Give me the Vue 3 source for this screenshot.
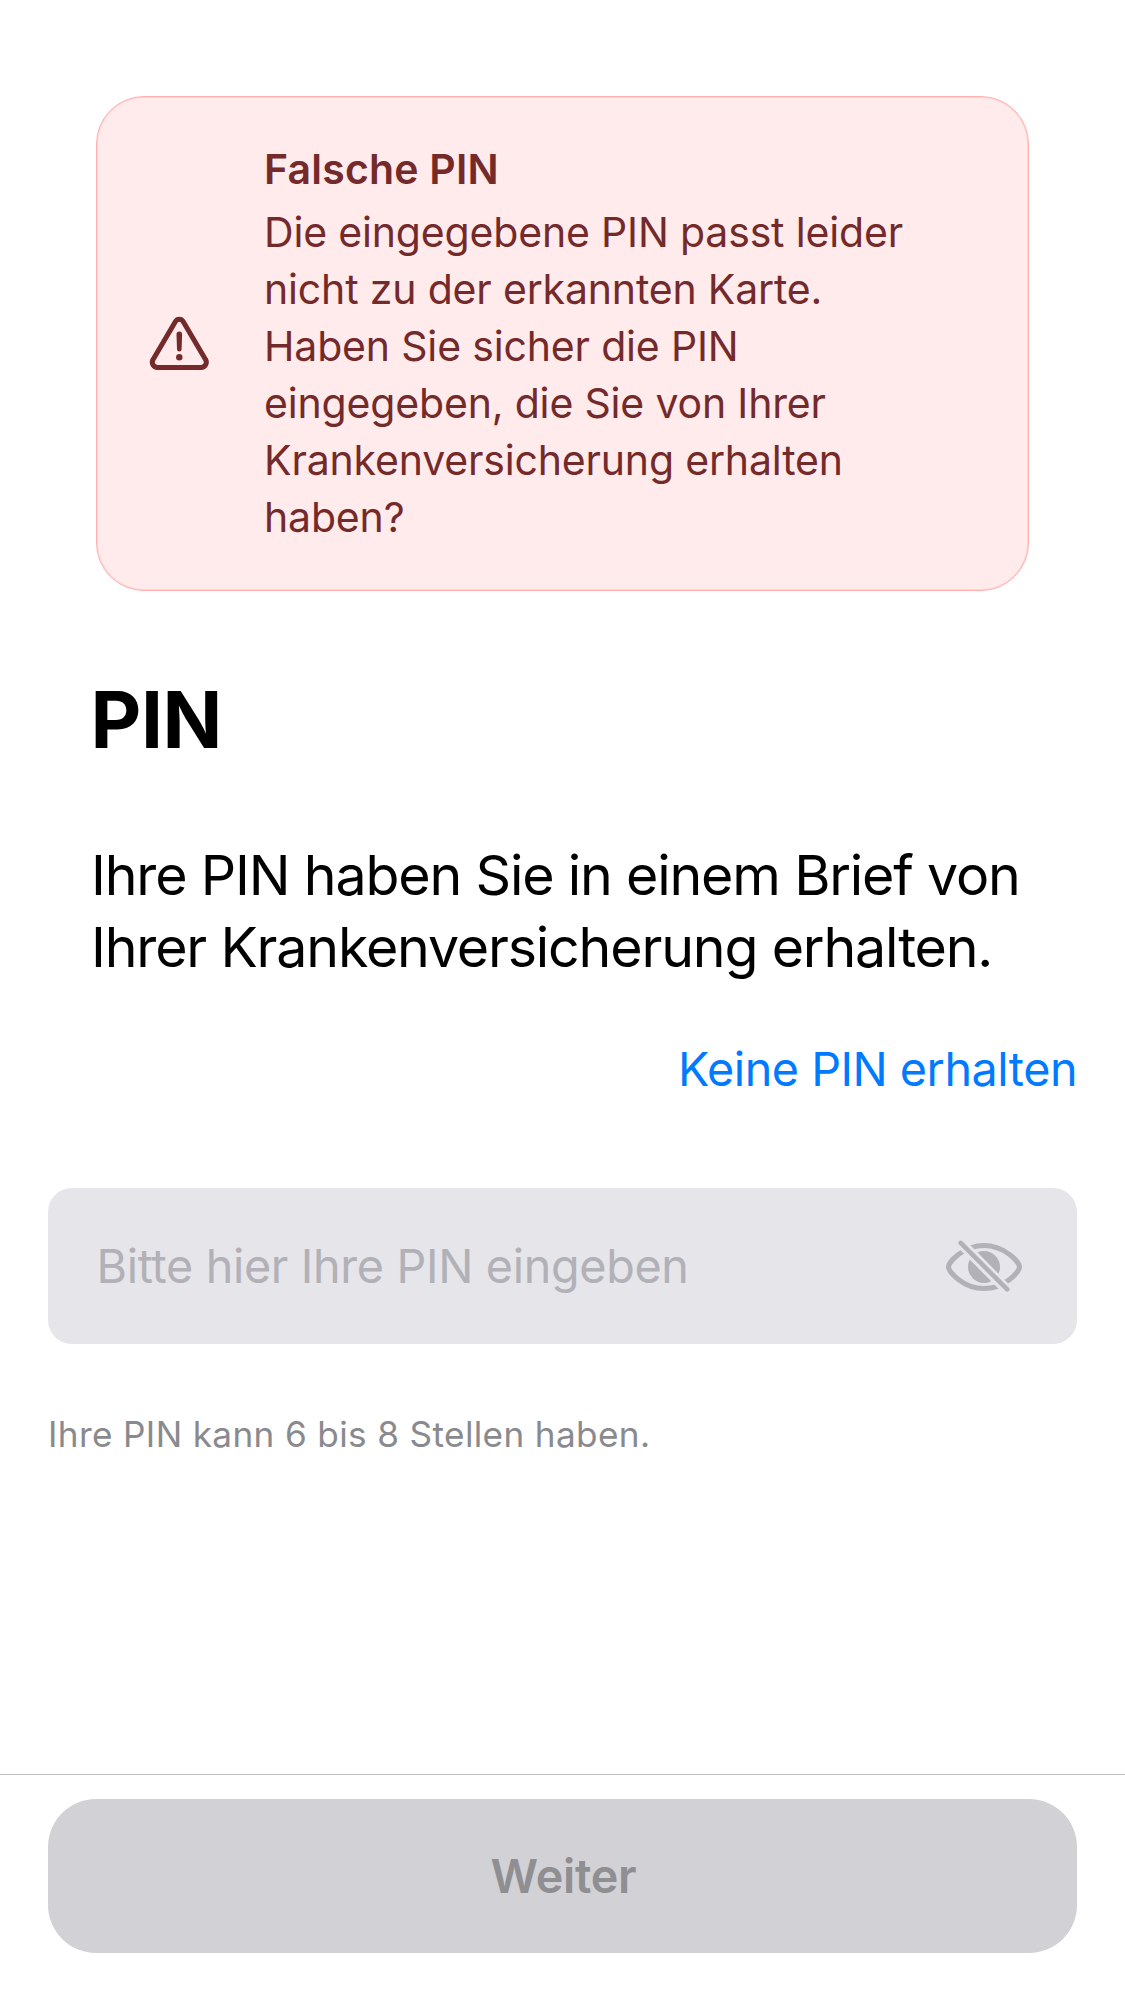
<script setup>
import { ref } from 'vue'

const pin = ref('')
const messageLines = [
  'Die eingegebene PIN passt leider',
  'nicht zu der erkannten Karte.',
  'Haben Sie sicher die PIN',
  'eingegeben, die Sie von Ihrer',
  'Krankenversicherung erhalten',
  'haben?',
]
</script>

<template>
  <div class="screen">
    <main class="content">
      <section class="alert" role="alert">
        <svg class="alert-icon" width="64" height="62" viewBox="0 0 64 62" fill="none">
          <path
            d="M27.6 9.3 L5.1 47.4 A5.3 5.3 0 0 0 9.6 55.5 H53 A5.3 5.3 0 0 0 57.5 47.4 L35 9.3 A4.3 4.3 0 0 0 27.6 9.3 Z"
            stroke="currentColor"
            stroke-width="5"
            stroke-linejoin="round"
          />
          <path d="M28.5 22.4 A2.8 2.8 0 0 1 34.1 22.4 L33.6 37.2 A2.3 2.3 0 0 1 29 37.2 Z" fill="currentColor" />
          <circle cx="31.3" cy="45.3" r="3.2" fill="currentColor" />
        </svg>
        <div class="alert-text">
          <h2>Falsche PIN</h2>
          <p><span v-for="line in messageLines" :key="line">{{ line }}</span></p>
        </div>
      </section>

      <h1>PIN</h1>
      <p class="intro">Ihre PIN haben Sie in einem Brief von<br />Ihrer Krankenversicherung erhalten.</p>
      <a class="link">Keine PIN erhalten</a>

      <label class="field">
        <input v-model="pin" type="password" placeholder="Bitte hier Ihre PIN eingeben" />
        <svg width="80" height="60" viewBox="0 0 80 60" fill="none">
          <defs>
            <mask id="slash-gap" maskUnits="userSpaceOnUse" x="0" y="0" width="80" height="60">
              <rect width="80" height="60" fill="#fff" />
              <path d="M8 -2 L72 63" stroke="#000" stroke-width="10.5" />
            </mask>
          </defs>
          <g mask="url(#slash-gap)">
            <path
              d="M4.5 31 C4.5 26.5 19 9.5 40 9.5 S75.5 26.5 75.5 31 S61 52.5 40 52.5 S4.5 35.5 4.5 31 Z"
              stroke="currentColor"
              stroke-width="5"
            />
            <circle cx="40" cy="31" r="16" fill="currentColor" />
          </g>
          <path d="M16.7 6.9 L63.2 53.4" stroke="currentColor" stroke-width="4.6" stroke-linecap="round" />
        </svg>
      </label>
      <p class="hint">Ihre PIN kann 6 bis 8 Stellen haben.</p>
    </main>

    <footer class="footer">
      <button disabled>Weiter</button>
    </footer>
  </div>
</template>

<style>
body {
  margin: 0;
  background: #fff;
}
</style>

<style scoped>
.screen {
  box-sizing: border-box;
  width: 1125px;
  height: 2001px;
  display: flex;
  flex-direction: column;
  background: #fff;
  color: #000;
  font-family: Inter, "Liberation Sans", sans-serif;
  white-space: nowrap;
}

h1,
h2,
p {
  margin: 0;
}

.content {
  flex: 1;
  display: flex;
  flex-direction: column;
  padding: 96px 48px 0;
}

.alert {
  box-sizing: border-box;
  height: 495px;
  margin: 0 48px;
  padding: 42px 51px 0 51px;
  display: flex;
  gap: 52px;
  border: 1px solid #ffb0b0;
  border-radius: 48px;
  background: #ffebeb;
  box-shadow: inset 0 0 0 1px #ffd3d3;
  color: #742a2a;
}

.alert-icon {
  flex: none;
  margin-top: 173px;
}

.alert h2 {
  font-size: 41px;
  font-weight: 600;
  line-height: 60px;
  letter-spacing: 0.2px;
}

.alert p {
  margin-top: 5px;
  font-size: 41px;
  line-height: 57px;
  letter-spacing: -0.17px;
}

.alert p span {
  display: block;
}

h1 {
  margin: 81px 42.5px 0;
  font-size: 78.5px;
  font-weight: 700;
  line-height: 96px;
  letter-spacing: -0.45px;
}

.intro {
  margin: 71px 43px 0;
  font-size: 55.5px;
  line-height: 72px;
  letter-spacing: -1.18px;
}

.link {
  align-self: flex-end;
  margin-top: 56px;
  font-size: 46.7px;
  line-height: 60px;
  letter-spacing: -0.48px;
  color: #007aff;
}

.field {
  box-sizing: border-box;
  height: 156px;
  margin-top: 89px;
  padding: 0 53px 0 48.5px;
  display: flex;
  align-items: center;
  justify-content: space-between;
  border-radius: 24px;
  background: #e5e5ea;
  color: #b2b1b7;
}

.field input {
  flex: 1;
  min-width: 0;
  height: 72px;
  padding: 0;
  border: 0;
  outline: 0;
  background: transparent;
  color: #000;
  font: inherit;
  font-size: 46.7px;
  letter-spacing: -0.33px;
}

.field input::placeholder {
  color: #b2b1b7;
  opacity: 1;
}

.hint {
  margin-top: 66px;
  font-size: 35.2px;
  line-height: 48px;
  letter-spacing: 0.34px;
  color: #8a8a8e;
}

.footer {
  padding: 24px 48px 48px;
  border-top: 1px solid #c0c0c2;
}

.footer button {
  display: block;
  width: 100%;
  height: 154px;
  padding: 0 0 0 2px;
  border: 0;
  border-radius: 48px;
  background: #d1d1d6;
  color: #8e8e93;
  font: inherit;
  font-size: 46.7px;
  font-weight: 600;
  letter-spacing: -0.25px;
}
</style>
